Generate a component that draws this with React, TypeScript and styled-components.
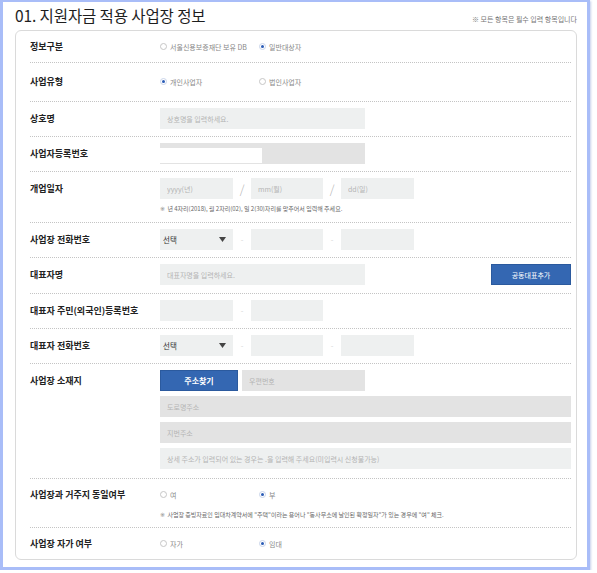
import React from "react";
import styled, { createGlobalStyle } from "styled-components";

const Global = createGlobalStyle`
  html, body { margin: 0; padding: 0; background: #fff; }
  body { font-family: "Noto Sans CJK KR", "Noto Sans", sans-serif; }
  *, *::before, *::after { box-sizing: border-box; }
`;

const Frame = styled.div`
  width: 590px;
  height: 570px;
  border: 3px solid #a9bdf8;
  border-top-width: 2px;
  background: #fff;
  box-shadow: 1px 1px 2px rgba(130, 150, 210, 0.45);
  padding: 0 10px 0 12px;
`;

const Header = styled.div`
  height: 28px;
  display: flex;
  align-items: baseline;
  justify-content: space-between;
  padding-top: 3px;
`;

const Title = styled.h2`
  margin: 0;
  font-size: 15.5px;
  font-weight: 400;
  color: #1e1e1e;
  line-height: 20px;
  letter-spacing: -0.1px;
`;

const Note = styled.span`
  font-size: 7px;
  color: #777;
`;

const Card = styled.div`
  border: 1px solid #dadada;
  border-radius: 6px;
  padding: 0 5px 0 14px;
`;

const Row = styled.div<{ $pt?: number; $pb?: number }>`
  display: grid;
  grid-template-columns: 130px 1fr;
  padding: ${(p) => p.$pt ?? 6}px 0 ${(p) => p.$pb ?? 7}px;
  & + & {
    border-top: 1px dotted #c4c4c4;
  }
`;

const Label = styled.div`
  font-size: 9px;
  font-weight: 700;
  color: #222;
  line-height: 21px;
  white-space: nowrap;
`;

const Content = styled.div`
  display: flex;
  flex-direction: column;
  gap: 5px;
`;

const Line = styled.div`
  display: flex;
  align-items: center;
  height: 21px;
`;

const Field = styled.input<{ $w?: number; $dis?: boolean }>`
  width: ${(p) => (p.$w ? `${p.$w}px` : "100%")};
  height: 21px;
  border: none;
  outline: none;
  margin: 0;
  padding: 0 7px;
  background: ${(p) => (p.$dis ? "#e3e3e3" : "#eef0f0")};
  font-family: inherit;
  font-size: 7px;
  color: #333;
  &::placeholder {
    color: #b4b4b4;
  }
`;

const MaskedField = styled.div`
  width: 205px;
  height: 21px;
  background: #e3e3e3;
  display: flex;
  align-items: flex-end;
  padding-bottom: 1px;
`;

const Mask = styled.div`
  width: 102px;
  height: 15px;
  background: #fff;
`;

const Sep = styled.span<{ $big?: boolean }>`
  width: 18px;
  text-align: center;
  color: ${(p) => (p.$big ? "#b0b0b0" : "#c4c4c4")};
  font-size: ${(p) => (p.$big ? "12px" : "8px")};
  font-weight: 300;
`;

const Select = styled.div`
  width: 73px;
  height: 21px;
  background: #eef0f0;
  display: flex;
  align-items: center;
  justify-content: space-between;
  padding: 0 7px 0 3px;
  font-size: 7.5px;
  color: #333;
`;

const Button = styled.button<{ $w: number; $bold?: boolean }>`
  width: ${(p) => p.$w}px;
  height: 21px;
  margin: 0;
  padding: 0;
  border: 1px solid #2b5a9e;
  background: #3467b2;
  color: #fff;
  font-family: inherit;
  font-size: ${(p) => (p.$bold ? "8px" : "7px")};
  font-weight: ${(p) => (p.$bold ? 700 : 400)};
  cursor: pointer;
`;

const Spacer = styled.div`
  flex: 1;
`;

const Gap = styled.div<{ $w: number }>`
  width: ${(p) => p.$w}px;
  flex: none;
`;

const RadioItem = styled.label`
  display: inline-flex;
  align-items: center;
  gap: 3px;
  min-width: 99px;
  font-size: 7px;
  color: #888;
  white-space: nowrap;
`;

const Dot = styled.span<{ $on?: boolean }>`
  width: 7px;
  height: 7px;
  border-radius: 50%;
  border: 1px solid ${(p) => (p.$on ? "#c9d4ea" : "#c6c6c6")};
  background: #fff;
  display: inline-flex;
  align-items: center;
  justify-content: center;
  &::after {
    content: "";
    width: 3px;
    height: 3px;
    border-radius: 50%;
    background: ${(p) => (p.$on ? "#2a5cb6" : "transparent")};
  }
`;

const Hint = styled.div`
  font-size: 6px;
  line-height: 10px;
  color: #666;
  white-space: nowrap;
`;

const Mark = styled.span`
  font-family: "DejaVu Sans", sans-serif;
  color: #888;
  margin-right: 1px;
`;

function Radio({ label, on }: { label: string; on?: boolean }) {
  return (
    <RadioItem>
      <Dot $on={on} />
      {label}
    </RadioItem>
  );
}

function Caret() {
  return (
    <svg width="7" height="5" viewBox="0 0 7 5">
      <path d="M0 0H7L3.5 5Z" fill="#444" />
    </svg>
  );
}

function PhoneLine() {
  return (
    <Line>
      <Select>
        <span>선택</span>
        <Caret />
      </Select>
      <Sep>-</Sep>
      <Field $w={72} />
      <Sep>-</Sep>
      <Field $w={73} />
    </Line>
  );
}

export default function App() {
  return (
    <>
      <Global />
      <Frame>
        <Header>
          <Title>01. 지원자금 적용 사업장 정보</Title>
          <Note>※ 모든 항목은 필수 입력 항목입니다</Note>
        </Header>
        <Card>
          <Row $pt={5} $pb={5}>
            <Label>정보구분</Label>
            <Line>
              <Radio label="서울신용보증재단 보유 DB" />
              <Radio label="일반대상자" on />
            </Line>
          </Row>
          <Row $pt={8} $pb={9}>
            <Label>사업유형</Label>
            <Line>
              <Radio label="개인사업자" on />
              <Radio label="법인사업자" />
            </Line>
          </Row>
          <Row>
            <Label>상호명</Label>
            <Line>
              <Field $w={205} placeholder="상호명을 입력하세요." />
            </Line>
          </Row>
          <Row>
            <Label>사업자등록번호</Label>
            <Line>
              <MaskedField>
                <Mask />
              </MaskedField>
            </Line>
          </Row>
          <Row $pb={8}>
            <Label>개업일자</Label>
            <Content>
              <Line>
                <Field $w={73} placeholder="yyyy(년)" />
                <Sep $big>/</Sep>
                <Field $w={72} placeholder="mm(월)" />
                <Sep $big>/</Sep>
                <Field $w={73} placeholder="dd(일)" />
              </Line>
              <Hint>
                <Mark>※</Mark> 년 4자리(2018), 월 2자리(02), 일 2(30)자리를 맞추어서 입력해 주세요.
              </Hint>
            </Content>
          </Row>
          <Row>
            <Label>사업장 전화번호</Label>
            <PhoneLine />
          </Row>
          <Row $pb={8}>
            <Label>대표자명</Label>
            <Line>
              <Field $w={205} placeholder="대표자명을 입력하세요." />
              <Spacer />
              <Button $w={80}>공동대표추가</Button>
            </Line>
          </Row>
          <Row>
            <Label>대표자 주민(외국인)등록번호</Label>
            <Line>
              <Field $w={73} />
              <Sep>-</Sep>
              <Field $w={72} />
            </Line>
          </Row>
          <Row>
            <Label>대표자 전화번호</Label>
            <PhoneLine />
          </Row>
          <Row $pb={9}>
            <Label>사업장 소재지</Label>
            <Content>
              <Line>
                <Button $w={78} $bold>
                  주소찾기
                </Button>
                <Gap $w={4} />
                <Field $w={123} $dis readOnly placeholder="우편번호" />
              </Line>
              <Line>
                <Field $dis readOnly placeholder="도로명주소" />
              </Line>
              <Line>
                <Field $dis readOnly placeholder="지번주소" />
              </Line>
              <Line>
                <Field placeholder="상세 주소가 입력되어 있는 경우는 .을 입력해 주세요(미입력시 신청불가능)" />
              </Line>
            </Content>
          </Row>
          <Row $pt={5} $pb={7}>
            <Label>사업장과 거주지 동일여부</Label>
            <Content>
              <Line>
                <Radio label="여" />
                <Radio label="부" on />
              </Line>
              <Hint>
                <Mark>※</Mark> 사업장 증빙자료인 임대차계약서에 "주택"이라는 용어나 "동사무소에 날인된 확정일자"가 있는 경우에 "여" 체크.
              </Hint>
            </Content>
          </Row>
          <Row $pt={5} $pb={5}>
            <Label>사업장 자가 여부</Label>
            <Line>
              <Radio label="자가" />
              <Radio label="임대" on />
            </Line>
          </Row>
        </Card>
      </Frame>
    </>
  );
}
